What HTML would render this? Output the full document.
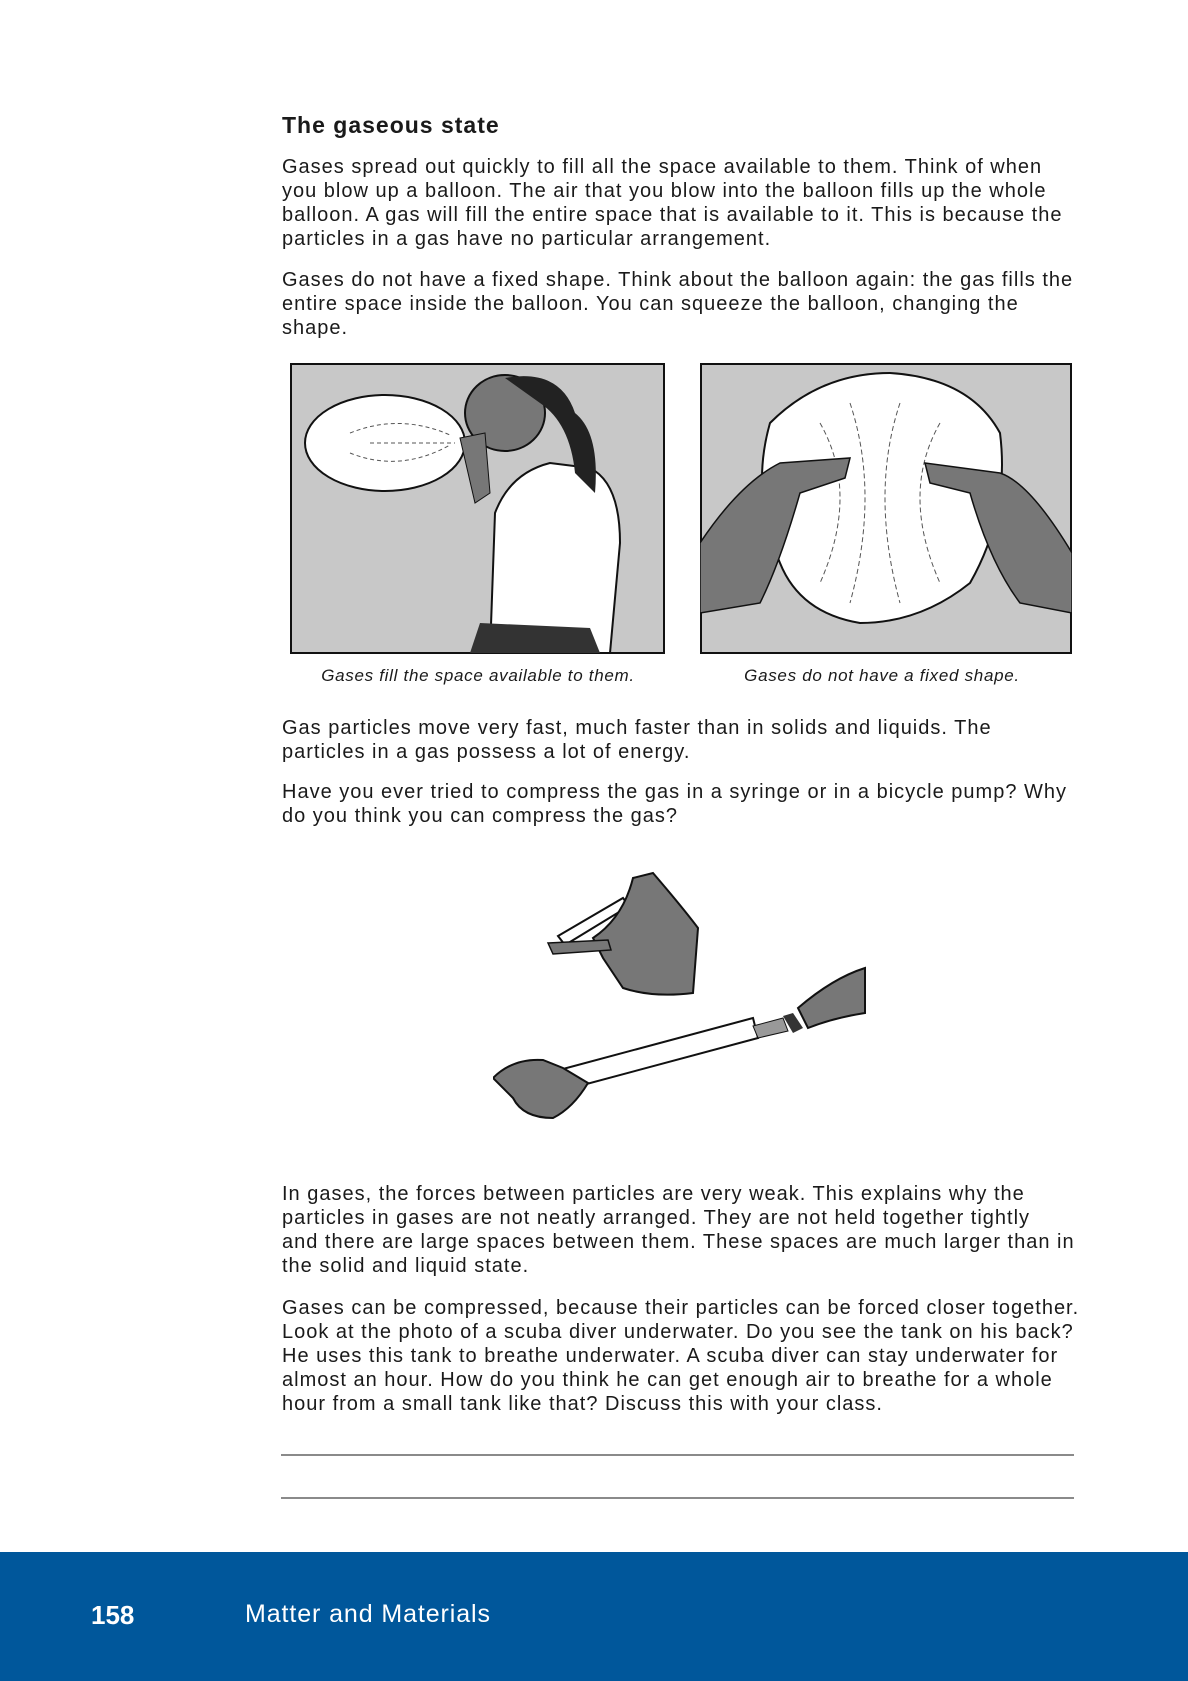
<!DOCTYPE html>
<html><head><meta charset="utf-8"><style>
body{margin:0;width:1188px;height:1681px;position:relative;background:#fff;font-family:"Liberation Sans",sans-serif;color:#1a1a1a;overflow:hidden}
.l{position:absolute;left:282px;font-size:20px;letter-spacing:1px;white-space:nowrap;line-height:24px}
.h{position:absolute;left:282px;top:112px;font-size:23px;font-weight:bold;letter-spacing:1px}
.cap{position:absolute;top:666px;font-size:17px;letter-spacing:0.7px;font-style:italic;transform:translateX(-50%);white-space:nowrap}
.rule{position:absolute;left:281px;width:793px;height:2px;background:#8a8a8a}
.foot{position:absolute;left:0;top:1552px;width:1188px;height:129px;background:#00579b;color:#fff}
</style></head><body>
<div class="h">The gaseous state</div>
<div class="l" style="top:155px">Gases spread out quickly to fill all the space available to them. Think of when</div>
<div class="l" style="top:179px">you blow up a balloon. The air that you blow into the balloon fills up the whole</div>
<div class="l" style="top:203px">balloon. A gas will fill the entire space that is available to it. This is because the</div>
<div class="l" style="top:227px">particles in a gas have no particular arrangement.</div>
<div class="l" style="top:268px">Gases do not have a fixed shape. Think about the balloon again: the gas fills the</div>
<div class="l" style="top:292px">entire space inside the balloon. You can squeeze the balloon, changing the</div>
<div class="l" style="top:316px">shape.</div>

<svg style="position:absolute;left:290px;top:363px" width="375" height="291">
<rect x="1" y="1" width="373" height="289" fill="#c8c8c8" stroke="#111" stroke-width="2"/>
<ellipse cx="95" cy="80" rx="80" ry="48" fill="#fff" stroke="#111" stroke-width="2"/>
<g stroke="#555" stroke-dasharray="4 3" fill="none"><path d="M60 70 Q110 50 160 72"/><path d="M60 90 Q110 110 160 82"/><path d="M80 80 H165"/></g>
<path d="M200 290 L205 150 Q220 110 260 100 L300 105 Q330 120 330 180 L320 290 Z" fill="#fff" stroke="#111" stroke-width="2"/>
<ellipse cx="215" cy="50" rx="40" ry="38" fill="#777" stroke="#111" stroke-width="2"/>
<path d="M215 15 Q270 5 285 50 Q310 70 305 130 L285 110 Q280 60 250 40 Z" fill="#222"/>
<path d="M170 75 L195 70 L200 130 L185 140 Z" fill="#777" stroke="#111"/>
<path d="M180 290 L190 260 L300 265 L310 290 Z" fill="#333"/>
</svg>
<svg style="position:absolute;left:700px;top:363px" width="372" height="291">
<rect x="1" y="1" width="370" height="289" fill="#c8c8c8" stroke="#111" stroke-width="2"/>
<path d="M70 60 Q120 10 190 10 Q270 15 300 70 Q310 150 270 220 Q220 260 160 260 Q100 250 80 200 Q50 130 70 60 Z" fill="#fff" stroke="#111" stroke-width="2"/>
<g stroke="#555" stroke-dasharray="5 3" fill="none"><path d="M120 60 Q160 130 120 220"/><path d="M150 40 Q180 130 150 240"/><path d="M200 40 Q170 130 200 240"/><path d="M240 60 Q200 130 240 220"/></g>
<path d="M0 180 Q40 120 80 100 L150 95 L145 115 L100 130 Q80 200 60 240 L0 250 Z" fill="#777" stroke="#111" stroke-width="1.5"/>
<path d="M372 190 Q330 120 300 110 L225 100 L230 120 L270 130 Q290 200 320 240 L372 250 Z" fill="#777" stroke="#111" stroke-width="1.5"/>
</svg>
<div class="cap" style="left:478px">Gases fill the space available to them.</div>
<div class="cap" style="left:882px">Gases do not have a fixed shape.</div>

<div class="l" style="top:716px">Gas particles move very fast, much faster than in solids and liquids. The</div>
<div class="l" style="top:740px">particles in a gas possess a lot of energy.</div>
<div class="l" style="top:780px">Have you ever tried to compress the gas in a syringe or in a bicycle pump? Why</div>
<div class="l" style="top:804px">do you think you can compress the gas?</div>

<svg style="position:absolute;left:493px;top:868px" width="375" height="270">
<path d="M65 68 L130 30 L136 38 L72 77 Z" fill="#fff" stroke="#111" stroke-width="2"/>
<path d="M100 70 Q130 50 140 10 L160 5 Q190 40 205 60 L200 125 Q160 130 130 120 L110 90 Z" fill="#777" stroke="#111" stroke-width="2"/>
<path d="M55 75 L115 72 L118 82 L60 86 Z" fill="#777" stroke="#111" stroke-width="1.5"/>
<path d="M55 205 L260 150 L265 170 L60 225 Z" fill="#fff" stroke="#111" stroke-width="2"/>
<path d="M260 158 L290 150 L295 163 L265 170 Z" fill="#999" stroke="#111"/>
<path d="M290 148 L300 145 L310 160 L300 165 Z" fill="#333"/>
<path d="M305 140 Q340 110 372 100 L372 145 Q340 150 315 160 Z" fill="#777" stroke="#111" stroke-width="2"/>
<path d="M0 210 Q20 190 50 192 L70 200 L95 215 Q80 240 60 250 Q30 250 20 230 Z" fill="#777" stroke="#111" stroke-width="2"/>
</svg>

<div class="l" style="top:1182px">In gases, the forces between particles are very weak. This explains why the</div>
<div class="l" style="top:1206px">particles in gases are not neatly arranged. They are not held together tightly</div>
<div class="l" style="top:1230px">and there are large spaces between them. These spaces are much larger than in</div>
<div class="l" style="top:1254px">the solid and liquid state.</div>
<div class="l" style="top:1296px">Gases can be compressed, because their particles can be forced closer together.</div>
<div class="l" style="top:1320px">Look at the photo of a scuba diver underwater. Do you see the tank on his back?</div>
<div class="l" style="top:1344px">He uses this tank to breathe underwater. A scuba diver can stay underwater for</div>
<div class="l" style="top:1368px">almost an hour. How do you think he can get enough air to breathe for a whole</div>
<div class="l" style="top:1392px">hour from a small tank like that? Discuss this with your class.</div>

<div class="rule" style="top:1454px"></div>
<div class="rule" style="top:1497px"></div>

<div class="foot">
<div style="position:absolute;left:91px;top:48px;font-size:26px;font-weight:bold">158</div>
<div style="position:absolute;left:245px;top:48px;font-size:25px;letter-spacing:0.9px">Matter and Materials</div>
</div>
</body></html>
